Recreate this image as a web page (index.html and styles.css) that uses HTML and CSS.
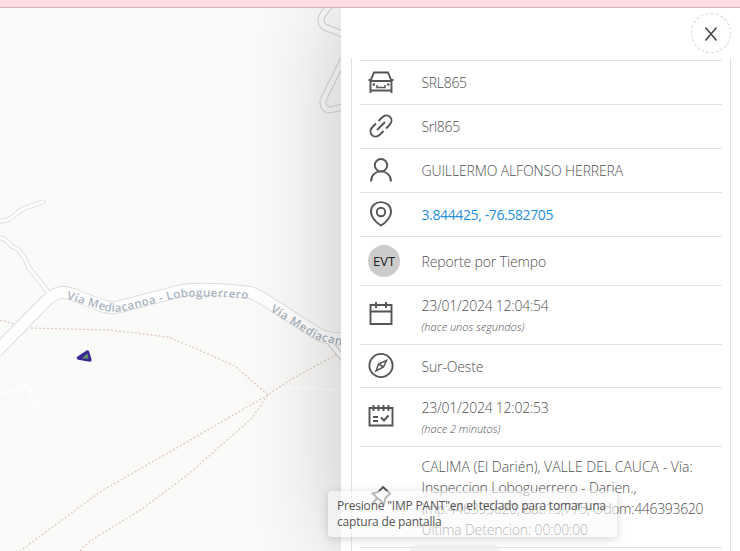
FILE: index.html
```html
<!DOCTYPE html>
<html lang="es">
<head>
<meta charset="utf-8">
<title>Detalle del vehículo</title>
<link rel="stylesheet" href="styles.css">
</head>
<body>
<div class="topbar"></div>
<main class="stage">
  <svg class="map" viewBox="0 8 740 543" width="740" height="543">
    <g class="path-white">
      <path d="M0 394 L16 391 Q22 379 28 388 L36 405 L43 406"/>
      <path d="M268 395 Q284 385 310 388 L345 391"/>
    </g>
    <g class="trail">
      <path d="M0 320 L28 328 L110 330 L168 337 L190 346 L235 366 L268 395 L290 380 L341 352"/>
      <path d="M268 395 L180 446 L100 492 L20 551"/>
      <path d="M268 395 L252 418 L190 473 L145 507 L90 541 L80 551"/>
    </g>
    <g id="roads">
      <g class="small-case">
        <path d="M0 221 C14 221 14 212 25 208 L43 202"/>
        <path d="M0 238 C7 238 8 244 13 247 C18 247 25 257 29 268 L49 293"/>
      </g>
      <g class="loop-case">
        <path d="M332 4 C323 13 317 20 324 27 C330 30 337 30 345 36"/>
        <path d="M346 54 L325 96 C320 105 325 112 334 109 L348 106"/>
      </g>
      <path class="main-case" d="M-6 354 L47 300 C58 290 67 291 79 297 L103 306 Q112 309 122 306 L172 293 Q192 286 246 292 Q252 292 262 298 L318 334 Q326 339 345 339"/>
      <path class="fork-case" d="M326 338 L345 361"/>
      <g class="small-fill">
        <path d="M0 221 C14 221 14 212 25 208 L43 202"/>
        <path d="M0 238 C7 238 8 244 13 247 C18 247 25 257 29 268 L49 293"/>
      </g>
      <g class="loop-fill">
        <path d="M332 4 C323 13 317 20 324 27 C330 30 337 30 345 36"/>
        <path d="M346 54 L325 96 C320 105 325 112 334 109 L348 106"/>
      </g>
      <path class="fork-fill" d="M326 338 L345 361"/>
      <path class="main-fill" d="M-6 354 L47 300 C58 290 67 291 79 297 L103 306 Q112 309 122 306 L172 293 Q192 286 246 292 Q252 292 262 298 L318 334 Q326 339 345 339"/>
    </g>
    <path id="label-a" fill="none" d="M66 299 Q90 306 106 311 Q116 313 128 310 L172 299 Q196 294 260 300"/>
    <path id="label-b" fill="none" d="M270 311 L312 337 Q324 344 360 347"/>
    <text class="road-name"><textPath href="#label-a" textLength="186">Vía Mediacanoa - Loboguerrero</textPath></text>
    <text class="road-name"><textPath href="#label-b">Vía Mediacanoa</textPath></text>
    <path class="vehicle" d="M78.500 358 L87.500 352 L90 360 Z"/>
    <path class="vehicle-core" d="M82 358.500 L87.500 353.500 L88.500 358.500 Z"/>
  </svg>

  <aside class="panel">
    <header class="panel-head">
      <button class="close" aria-label="Cerrar">
        <svg width="14" height="16" viewBox="0 0 14 16"><path d="M1.500 1.500 L12.500 14.500 M12.500 1.500 L1.500 14.500"/></svg>
      </button>
    </header>
    <div class="card">
      <ul class="rows">
        <li class="row">
          <svg class="icon" viewBox="0 0 26 26"><path d="M2.500 24 V12 L6 3.500 H20 L23.500 12 V24 M.5 11 H4 M22 11 H25.500 M3 12 H23 M2.500 21.500 H23.500"/><path class="thin" d="M9 16 V18.500 H17 V16 M4.500 15.500 H7 M5.750 14.300 V16.700 M19 15.500 H21.500 M20.250 14.300 V16.700"/></svg>
          <span class="value plate">SRL865</span>
        </li>
        <li class="row">
          <svg class="icon" viewBox="0 0 26 26"><path d="M10.500 8 L14 4.500 C20 -1 27 6 21.500 12 L18 15.500 M15.500 18 L12 21.500 C6 27 -1 20 4.500 14 L8 10.500 M9 17 L17 9"/></svg>
          <span class="value plate">Srl865</span>
        </li>
        <li class="row">
          <svg class="icon" viewBox="0 0 26 26"><circle cx="13" cy="8.200" r="6.200"/><path d="M3 24.500 C3 11 23 11 23 24.500"/></svg>
          <span class="value name">GUILLERMO ALFONSO HERRERA</span>
        </li>
        <li class="row">
          <svg class="icon" viewBox="0 0 26 26"><path d="M13 24.500 C9 22 3 16.500 3 10.500 C3 -2 23 -2 23 10.500 C23 16.500 17 22 13 24.500 Z"/><circle cx="13" cy="11" r="4.200"/></svg>
          <a class="value coords">3.844425, -76.582705</a>
        </li>
        <li class="row row-event">
          <span class="badge">EVT</span>
          <span class="value event">Reporte por Tiempo</span>
        </li>
        <li class="row row-date">
          <svg class="icon" viewBox="0 0 26 26"><path d="M2.500 4 H23.500 V23 H2.500 Z M2.500 10.500 H23.500 M8 1 V7 M18 1 V7"/></svg>
          <div class="stack"><span class="value date">23/01/2024 12:04:54</span><em class="ago">(hace unos segundos)</em></div>
        </li>
        <li class="row row-dir">
          <svg class="icon" viewBox="0 0 26 26"><circle cx="13" cy="13.500" r="11.600"/><path class="thin" d="M18.500 8.500 L15.500 15 L8 19 L10.500 12 Z M10.500 12 L15.500 15"/></svg>
          <span class="value dir">Sur-Oeste</span>
        </li>
        <li class="row row-date">
          <svg class="icon" viewBox="0 0 26 26"><path d="M1.500 5 H24.500 V22.500 H1.500 Z M5.500 2 V8 M10.500 2 V8 M15.500 2 V8 M20.500 2 V8 M5 14 H10 M5 18 H10 M13 14.500 L16 17.500 L20.500 12.500"/></svg>
          <div class="stack"><span class="value date">23/01/2024 12:02:53</span><em class="ago">(hace 2 minutos)</em></div>
        </li>
        <li class="row row-place">
          <svg class="icon" viewBox="0 0 26 26"><path d="M15 4 L22 10.500 L17.500 15 L16 21 L4.500 10.500 L10.500 9 Z M9 15.500 L4 21"/></svg>
          <div class="place">
            <span class="p1">CALIMA (El Darién), VALLE DEL CAUCA - Vía:</span>
            <span class="p2">Inspeccion Loboguerrero - Darien.,</span>
            <span class="p3">Imp:446393620, Bat:13,775, Odom:446393620</span>
            <span class="p4">Última Detencion: 00:00:00</span>
          </div>
        </li>
      </ul>
    </div>
  </aside>
</main>
<div class="toast"><span class="t1">Presione "IMP PANT"en el teclado para tomar una</span><span class="t2">captura de pantalla</span></div>
<div class="toast-next"></div>
</body>
</html>
```
FILE: styles.css
```css
* { box-sizing: border-box; }
body {
  margin: 0;
  width: 740px;
  height: 551px;
  overflow: hidden;
  position: relative;
  background: #fafaf8;
  color: #505050;
  font: 300 14px/21px "Open Sans", "Noto Sans", sans-serif;
}
.topbar { height: 8px; background: #ffdde3; border-bottom: 1px solid #ccb4b8; position: relative; z-index: 2; }
.stage { height: 543px; display: flex; justify-content: flex-end; position: relative; overflow: hidden; }

.map { position: absolute; left: 0; top: 0; }
.map g path { fill: none; stroke-linejoin: round; }
.path-white { stroke: #fff; stroke-width: 1.500; }
.trail { stroke: #e0c4c6; stroke-width: 1.200; stroke-dasharray: 2 2; }
.small-case { stroke: #dcdcdc; stroke-width: 5; stroke-linecap: round; }
.small-fill { stroke: #fdfdfd; stroke-width: 3.200; stroke-linecap: round; }
.loop-case { stroke: #d5d5d5; stroke-width: 7; }
.loop-fill { stroke: #fcfcfc; stroke-width: 5; }
.map .main-case { fill: none; stroke: #dedede; stroke-width: 13; }
.map .main-fill { fill: none; stroke: #fff; stroke-width: 11; }
.fork-case { stroke: #d3d3d3; stroke-width: 6; }
.fork-fill { stroke: #fff; stroke-width: 4; }
.road-name { font: 600 11.500px "Open Sans", sans-serif; fill: #a9b4bf; letter-spacing: .6px; }
.vehicle { fill: #3c2894; stroke: #3c2894; stroke-width: 3.400; stroke-linejoin: round; }
.vehicle-core { fill: #5b9a58; }

.panel { width: 399px; height: 543px; background: #fff; position: relative; box-shadow: 0 0 90px rgba(0, 0, 0, .22); }
.panel-head { height: 50px; padding: 5px 9px 0 0; display: flex; justify-content: flex-end; }
.close {
  width: 40px; height: 40px; padding: 0;
  display: flex; align-items: center; justify-content: center;
  border: 1px dashed #d5d5d5; border-radius: 50%; background: #fff;
}
.close svg { margin-top: 2px; fill: none; stroke: #444; stroke-width: 1.500; }
.card { margin: 0 9px 0 10px; height: 493px; padding: 2px 8px 0; border: solid #e3e3e3; border-width: 0 1px; overflow: hidden; }
.rows { list-style: none; margin: 0; padding: 0; border-top: 1px solid #e3e3e3; }
.row { height: 44px; display: flex; align-items: center; gap: 27.500px; padding-left: 8px; border-bottom: 1px solid #e3e3e3; white-space: nowrap; }
.icon { width: 26px; height: 26px; margin: 0 0 2px; flex: none; fill: none; stroke: #555; stroke-width: 1.900; }
.row .thin { stroke-width: 1.500; }
.row-event { height: 49px; gap: 21.500px; }
.badge { width: 32px; height: 32px; border-radius: 50%; background: #ccc; color: #222; font-weight: 400; font-size: 13px; display: flex; align-items: center; justify-content: center; }
.row-date { height: 59px; }
.row-dir { height: 43px; }
.row-place { height: 101px; }
.stack { display: flex; flex-direction: column; padding-top: 2px; }
.plate { letter-spacing: -.3px; }
.name { letter-spacing: -.13px; }
.event { letter-spacing: -.12px; }
.date { letter-spacing: -.25px; }
.dir { letter-spacing: -.15px; }
.ago { font-size: 11px; line-height: 22px; }
.coords { color: #2390dd; font-weight: 400; letter-spacing: -.38px; }
.place { display: flex; flex-direction: column; padding-top: 1px; }
.p2 { letter-spacing: -.1px; }
.p3 { letter-spacing: -.32px; }
.p4 { letter-spacing: -.16px; }

.toast {
  position: absolute; left: 328px; top: 491px; width: 289px; height: 46px;
  padding: 7px 9px; border-radius: 4px;
  display: flex; flex-direction: column;
  background: rgba(250, 250, 250, .6);
  box-shadow: 0 2px 10px rgba(0, 0, 0, .17);
  color: #555; font-weight: 400; font-size: 12px; line-height: 16px; letter-spacing: -.2px; white-space: nowrap;
}
.toast-next { position: absolute; left: 411px; top: 546px; width: 88px; height: 20px; border-radius: 5px; background: rgba(238, 238, 238, .8); box-shadow: 0 0 4px rgba(0, 0, 0, .1); }
```
